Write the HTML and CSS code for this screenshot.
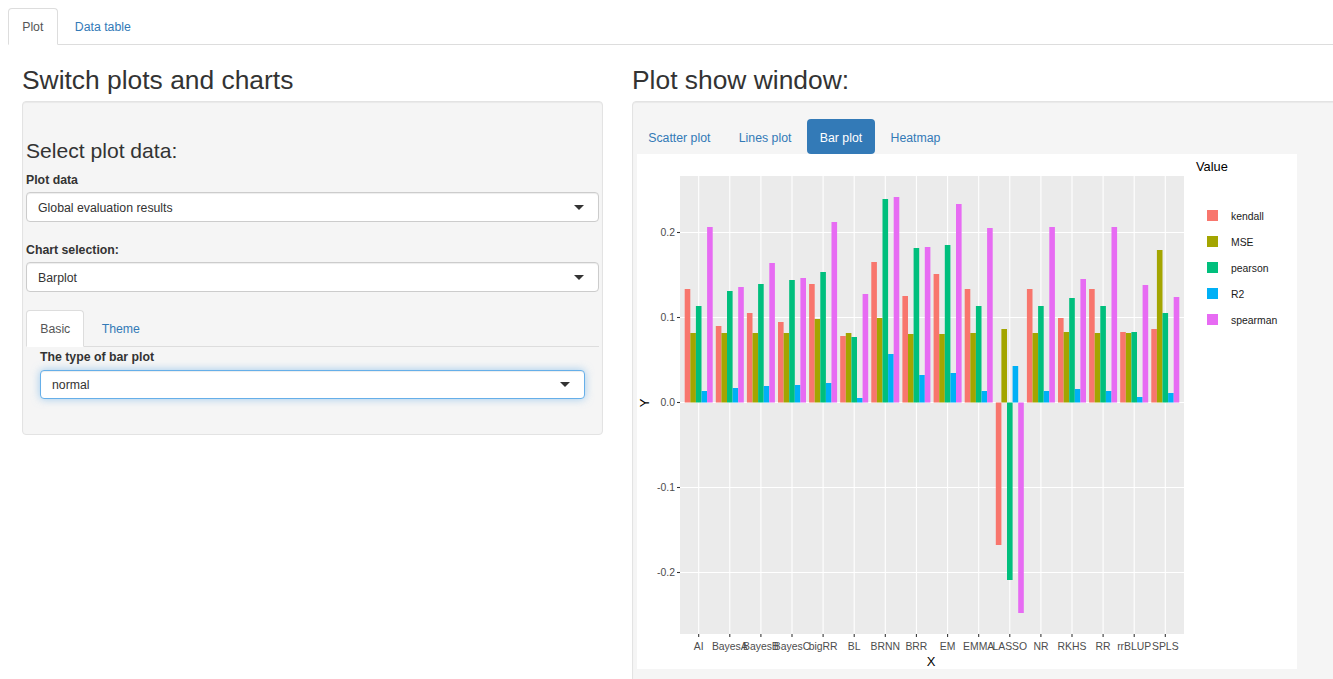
FILE: index.html
```html
<!DOCTYPE html>
<html>
<head>
<meta charset="utf-8">
<title>Plot</title>
<link rel="stylesheet" href="styles.css">
</head>
<body>
<div class="page">
  <ul class="tabs top-tabs">
    <li class="active"><span>Plot</span></li>
    <li><span>Data table</span></li>
  </ul>
  <div class="row">
    <div class="col col-left">
      <h2 class="title">Switch plots and charts</h2>
      <div class="well well-left">
        <h3 class="subtitle">Select plot data:</h3>
        <div class="group">
          <label class="lbl">Plot data</label>
          <div class="select">Global evaluation results</div>
        </div>
        <div class="group group-last">
          <label class="lbl">Chart selection:</label>
          <div class="select">Barplot</div>
        </div>
        <ul class="tabs inner-tabs">
          <li class="active"><span>Basic</span></li>
          <li><span>Theme</span></li>
        </ul>
        <div class="tab-content">
          <label class="lbl lbl-inner">The type of bar plot</label>
          <div class="select select-focus">normal</div>
        </div>
      </div>
    </div>
    <div class="col col-right">
      <h2 class="title">Plot show window:</h2>
      <div class="well well-right">
        <ul class="pills">
          <li>Scatter plot</li>
          <li>Lines plot</li>
          <li class="active">Bar plot</li>
          <li>Heatmap</li>
        </ul>
        <div class="plot">
          <svg width="660" height="515" viewBox="637 155 660 515" xmlns="http://www.w3.org/2000/svg">
            <rect x="637" y="155" width="660" height="515" fill="#ffffff"/>
            <rect x="680" y="177" width="504" height="458" fill="#EBEBEB"/>
            <g class="grid">
              <line x1="680" x2="1184" y1="233.5" y2="233.5"/>
              <line x1="680" x2="1184" y1="318.5" y2="318.5"/>
              <line x1="680" x2="1184" y1="403.5" y2="403.5"/>
              <line x1="680" x2="1184" y1="488.5" y2="488.5"/>
              <line x1="680" x2="1184" y1="573.5" y2="573.5"/>
              <line x1="698.7" x2="698.7" y1="177" y2="635"/>
              <line x1="729.8" x2="729.8" y1="177" y2="635"/>
              <line x1="760.9" x2="760.9" y1="177" y2="635"/>
              <line x1="792" x2="792" y1="177" y2="635"/>
              <line x1="823.1" x2="823.1" y1="177" y2="635"/>
              <line x1="854.2" x2="854.2" y1="177" y2="635"/>
              <line x1="885.3" x2="885.3" y1="177" y2="635"/>
              <line x1="916.4" x2="916.4" y1="177" y2="635"/>
              <line x1="947.6" x2="947.6" y1="177" y2="635"/>
              <line x1="978.7" x2="978.7" y1="177" y2="635"/>
              <line x1="1009.8" x2="1009.8" y1="177" y2="635"/>
              <line x1="1040.9" x2="1040.9" y1="177" y2="635"/>
              <line x1="1072" x2="1072" y1="177" y2="635"/>
              <line x1="1103.1" x2="1103.1" y1="177" y2="635"/>
              <line x1="1134.2" x2="1134.2" y1="177" y2="635"/>
              <line x1="1165.3" x2="1165.3" y1="177" y2="635"/>
            </g>
            <g class="bar-k">
              <rect x="684.7" y="290" width="5.6" height="113.5"/>
              <rect x="715.8" y="327" width="5.6" height="76.5"/>
              <rect x="746.9" y="314" width="5.6" height="89.5"/>
              <rect x="778.0" y="323" width="5.6" height="80.5"/>
              <rect x="809.1" y="285" width="5.6" height="118.5"/>
              <rect x="840.2" y="337" width="5.6" height="66.5"/>
              <rect x="871.3" y="263" width="5.6" height="140.5"/>
              <rect x="902.4" y="297" width="5.6" height="106.5"/>
              <rect x="933.6" y="275" width="5.6" height="128.5"/>
              <rect x="964.7" y="290" width="5.6" height="113.5"/>
              <rect x="995.8" y="403.5" width="5.6" height="142.5"/>
              <rect x="1026.9" y="290" width="5.6" height="113.5"/>
              <rect x="1058.0" y="319" width="5.6" height="84.5"/>
              <rect x="1089.1" y="290" width="5.6" height="113.5"/>
              <rect x="1120.2" y="333" width="5.6" height="70.5"/>
              <rect x="1151.3" y="330" width="5.6" height="73.5"/>
            </g>
            <g class="bar-m">
              <rect x="690.3" y="334" width="5.6" height="69.5"/>
              <rect x="721.4" y="334" width="5.6" height="69.5"/>
              <rect x="752.5" y="334" width="5.6" height="69.5"/>
              <rect x="783.6" y="334" width="5.6" height="69.5"/>
              <rect x="814.7" y="320" width="5.6" height="83.5"/>
              <rect x="845.8" y="334" width="5.6" height="69.5"/>
              <rect x="876.9" y="319" width="5.6" height="84.5"/>
              <rect x="908.0" y="335" width="5.6" height="68.5"/>
              <rect x="939.2" y="335" width="5.6" height="68.5"/>
              <rect x="970.3" y="334" width="5.6" height="69.5"/>
              <rect x="1001.4" y="330" width="5.6" height="73.5"/>
              <rect x="1032.5" y="334" width="5.6" height="69.5"/>
              <rect x="1063.6" y="333" width="5.6" height="70.5"/>
              <rect x="1094.7" y="334" width="5.6" height="69.5"/>
              <rect x="1125.8" y="334" width="5.6" height="69.5"/>
              <rect x="1156.9" y="251" width="5.6" height="152.5"/>
            </g>
            <g class="bar-p">
              <rect x="695.9" y="307" width="5.6" height="96.5"/>
              <rect x="727.0" y="292" width="5.6" height="111.5"/>
              <rect x="758.1" y="285" width="5.6" height="118.5"/>
              <rect x="789.2" y="281" width="5.6" height="122.5"/>
              <rect x="820.3" y="273" width="5.6" height="130.5"/>
              <rect x="851.4" y="338" width="5.6" height="65.5"/>
              <rect x="882.5" y="200" width="5.6" height="203.5"/>
              <rect x="913.6" y="249" width="5.6" height="154.5"/>
              <rect x="944.8" y="246" width="5.6" height="157.5"/>
              <rect x="975.9" y="307" width="5.6" height="96.5"/>
              <rect x="1007.0" y="403.5" width="5.6" height="177.5"/>
              <rect x="1038.1" y="307" width="5.6" height="96.5"/>
              <rect x="1069.2" y="299" width="5.6" height="104.5"/>
              <rect x="1100.3" y="307" width="5.6" height="96.5"/>
              <rect x="1131.4" y="333" width="5.6" height="70.5"/>
              <rect x="1162.5" y="314" width="5.6" height="89.5"/>
            </g>
            <g class="bar-r">
              <rect x="701.5" y="392" width="5.6" height="11.5"/>
              <rect x="732.6" y="389" width="5.6" height="14.5"/>
              <rect x="763.7" y="387" width="5.6" height="16.5"/>
              <rect x="794.8" y="386" width="5.6" height="17.5"/>
              <rect x="825.9" y="384" width="5.6" height="19.5"/>
              <rect x="857.0" y="399" width="5.6" height="4.5"/>
              <rect x="888.1" y="355" width="5.6" height="48.5"/>
              <rect x="919.2" y="376" width="5.6" height="27.5"/>
              <rect x="950.4" y="374" width="5.6" height="29.5"/>
              <rect x="981.5" y="392" width="5.6" height="11.5"/>
              <rect x="1012.6" y="367" width="5.6" height="36.5"/>
              <rect x="1043.7" y="392" width="5.6" height="11.5"/>
              <rect x="1074.8" y="390" width="5.6" height="13.5"/>
              <rect x="1105.9" y="392" width="5.6" height="11.5"/>
              <rect x="1137.0" y="398" width="5.6" height="5.5"/>
              <rect x="1168.1" y="394" width="5.6" height="9.5"/>
            </g>
            <g class="bar-s">
              <rect x="707.1" y="228" width="5.6" height="175.5"/>
              <rect x="738.2" y="288" width="5.6" height="115.5"/>
              <rect x="769.3" y="264" width="5.6" height="139.5"/>
              <rect x="800.4" y="279" width="5.6" height="124.5"/>
              <rect x="831.5" y="223" width="5.6" height="180.5"/>
              <rect x="862.6" y="295" width="5.6" height="108.5"/>
              <rect x="893.7" y="198" width="5.6" height="205.5"/>
              <rect x="924.8" y="248" width="5.6" height="155.5"/>
              <rect x="956.0" y="205" width="5.6" height="198.5"/>
              <rect x="987.1" y="229" width="5.6" height="174.5"/>
              <rect x="1018.2" y="403.5" width="5.6" height="210.5"/>
              <rect x="1049.3" y="228" width="5.6" height="175.5"/>
              <rect x="1080.4" y="280" width="5.6" height="123.5"/>
              <rect x="1111.5" y="228" width="5.6" height="175.5"/>
              <rect x="1142.6" y="286" width="5.6" height="117.5"/>
              <rect x="1173.7" y="298" width="5.6" height="105.5"/>
            </g>
            <g class="ticks">
              <line x1="677" x2="680" y1="233.5" y2="233.5"/>
              <line x1="677" x2="680" y1="318.5" y2="318.5"/>
              <line x1="677" x2="680" y1="403.5" y2="403.5"/>
              <line x1="677" x2="680" y1="488.5" y2="488.5"/>
              <line x1="677" x2="680" y1="573.5" y2="573.5"/>
              <line x1="698.7" x2="698.7" y1="635" y2="638"/>
              <line x1="729.8" x2="729.8" y1="635" y2="638"/>
              <line x1="760.9" x2="760.9" y1="635" y2="638"/>
              <line x1="792" x2="792" y1="635" y2="638"/>
              <line x1="823.1" x2="823.1" y1="635" y2="638"/>
              <line x1="854.2" x2="854.2" y1="635" y2="638"/>
              <line x1="885.3" x2="885.3" y1="635" y2="638"/>
              <line x1="916.4" x2="916.4" y1="635" y2="638"/>
              <line x1="947.6" x2="947.6" y1="635" y2="638"/>
              <line x1="978.7" x2="978.7" y1="635" y2="638"/>
              <line x1="1009.8" x2="1009.8" y1="635" y2="638"/>
              <line x1="1040.9" x2="1040.9" y1="635" y2="638"/>
              <line x1="1072" x2="1072" y1="635" y2="638"/>
              <line x1="1103.1" x2="1103.1" y1="635" y2="638"/>
              <line x1="1134.2" x2="1134.2" y1="635" y2="638"/>
              <line x1="1165.3" x2="1165.3" y1="635" y2="638"/>
            </g>
            <g class="axis-y">
              <text x="675" y="237.2">0.2</text>
              <text x="675" y="322.2">0.1</text>
              <text x="675" y="407.2">0.0</text>
              <text x="675" y="492.2">-0.1</text>
              <text x="675" y="577.2">-0.2</text>
            </g>
            <g class="axis-x">
              <text x="698.7" y="651">AI</text>
              <text x="729.8" y="651">BayesA</text>
              <text x="760.9" y="651">BayesB</text>
              <text x="792" y="651">BayesC</text>
              <text x="823.1" y="651">bigRR</text>
              <text x="854.2" y="651">BL</text>
              <text x="885.3" y="651">BRNN</text>
              <text x="916.4" y="651">BRR</text>
              <text x="947.6" y="651">EM</text>
              <text x="978.7" y="651">EMMA</text>
              <text x="1009.8" y="651">LASSO</text>
              <text x="1040.9" y="651">NR</text>
              <text x="1072" y="651">RKHS</text>
              <text x="1103.1" y="651">RR</text>
              <text x="1134.2" y="651">rrBLUP</text>
              <text x="1165.3" y="651">SPLS</text>
            </g>
            <text class="axis-title" x="931" y="667" text-anchor="middle">X</text>
            <text class="axis-title" x="648.5" y="404" text-anchor="middle" transform="rotate(-90 648.5 404)">Y</text>
            <text class="legend-title" x="1196" y="171.5">Value</text>
            <rect class="bar-k" x="1207" y="211" width="11" height="11"/>
            <rect class="bar-m" x="1207" y="237" width="11" height="11"/>
            <rect class="bar-p" x="1207" y="263" width="11" height="11"/>
            <rect class="bar-r" x="1207" y="289" width="11" height="11"/>
            <rect class="bar-s" x="1207" y="315" width="11" height="11"/>
            <g class="legend-text">
              <text x="1231" y="220.5">kendall</text>
              <text x="1231" y="246.5">MSE</text>
              <text x="1231" y="272.5">pearson</text>
              <text x="1231" y="298.5">R2</text>
              <text x="1231" y="324.5">spearman</text>
            </g>
          </svg>
        </div>
      </div>
    </div>
  </div>
</div>
</body>
</html>
```

FILE: styles.css
```css
html, body {
  margin: 0;
  padding: 0;
  overflow: hidden;
}

body {
  width: 1333px;
  height: 679px;
  background: #ffffff;
  color: #333333;
  font-family: "Liberation Sans", Arial, Helvetica, sans-serif;
  font-size: 12.3px;
  line-height: 17.6px;
}

.page {
  padding: 8px 0 0 8px;
}

/* tabs */
.tabs {
  display: flex;
  list-style: none;
  margin: 0;
  padding: 0;
  border-bottom: 1px solid #dddddd;
}

.tabs li {
  margin-right: 3px;
  margin-bottom: -1px;
}

.tabs li span {
  display: block;
  padding: 10.4px 13.2px 7.2px;
  border: 1px solid transparent;
  border-radius: 4px 4px 0 0;
  color: #337ab7;
}

.tabs li.active span {
  color: #555555;
  background: #ffffff;
  border-color: #dddddd #dddddd transparent #dddddd;
}

/* layout */
.row {
  display: flex;
  gap: 29px;
  margin-left: 14px;
}

.col-left {
  flex: 0 0 581px;
}

.col-right {
  flex: 0 0 720px;
}

.title {
  margin: 20.5px 0 6.5px;
  font-size: 26.4px;
  line-height: 29px;
  font-weight: normal;
  color: #333333;
}

.well {
  box-sizing: border-box;
  background: #f5f5f5;
  border: 1px solid #e3e3e3;
  border-radius: 4px;
  box-shadow: inset 0 1px 1px rgba(0, 0, 0, 0.05);
}

.well-left {
  height: 334px;
  padding: 37px 3px 0 3px;
}

.subtitle {
  margin: 0 0 8.8px;
  font-size: 21.1px;
  line-height: 23.2px;
  font-weight: normal;
  color: #333333;
}

.group {
  margin-bottom: 20px;
}

.group-last {
  margin-bottom: 17.5px;
}

.lbl {
  display: block;
  font-weight: bold;
  padding-top: 1px;
  margin-bottom: 2px;
  color: #333333;
}

.group-last .lbl {
  padding-top: 0;
  margin-bottom: 3px;
}

.select {
  position: relative;
  box-sizing: border-box;
  height: 30px;
  line-height: 30px;
  padding: 0 11px;
  background: #ffffff;
  border: 1px solid #cccccc;
  border-radius: 4px;
  box-shadow: inset 0 1px 1px rgba(0, 0, 0, 0.075);
  color: #333333;
}

.select::after {
  content: "";
  position: absolute;
  right: 14px;
  top: 50%;
  margin-top: -2px;
  border-style: solid;
  border-width: 5px 5px 0 5px;
  border-color: #333333 transparent transparent transparent;
}

.select-focus {
  height: 29px;
  line-height: 29px;
  border-color: #66afe9;
  box-shadow: inset 0 1px 1px rgba(0, 0, 0, 0.075), 0 0 8px rgba(102, 175, 233, 0.6);
}

.inner-tabs li.active span {
  background: #ffffff;
}

.tab-content {
  padding: 1px 14px 0 14px;
}

.lbl-inner {
  margin-bottom: 3px;
}

/* right */
.well-right {
  height: 600px;
  padding: 17px 0 0 4px;
}

.pills {
  display: flex;
  list-style: none;
  margin: 0 0 0 -2px;
  padding: 0;
}

.pills li {
  padding: 10.4px 13.2px 7.2px;
  margin-right: 2px;
  border-radius: 4px;
  color: #337ab7;
}

.pills li.active {
  background: #337ab7;
  color: #ffffff;
}

.plot {
  width: 660px;
  height: 515px;
}

.plot svg {
  display: block;
}

/* chart */
.grid line {
  stroke: #ffffff;
  stroke-width: 1.07;
}

.ticks line {
  stroke: #333333;
  stroke-width: 1.07;
}

.bar-k { fill: #F8766D; }
.bar-m { fill: #A3A500; }
.bar-p { fill: #00BF7D; }
.bar-r { fill: #00B0F6; }
.bar-s { fill: #E76BF3; }

.axis-y text {
  font-family: "Liberation Sans", Arial, sans-serif;
  font-size: 10.4px;
  fill: #4d4d4d;
  text-anchor: end;
}

.axis-x text {
  font-family: "Liberation Sans", Arial, sans-serif;
  font-size: 10.4px;
  fill: #4d4d4d;
  text-anchor: middle;
}

.axis-title {
  font-family: "Liberation Sans", Arial, sans-serif;
  font-size: 13px;
  fill: #000000;
}

.legend-title {
  font-family: "Liberation Sans", Arial, sans-serif;
  font-size: 12.8px;
  fill: #000000;
}

.legend-text text {
  font-family: "Liberation Sans", Arial, sans-serif;
  font-size: 10.4px;
  fill: #1a1a1a;
}
```
